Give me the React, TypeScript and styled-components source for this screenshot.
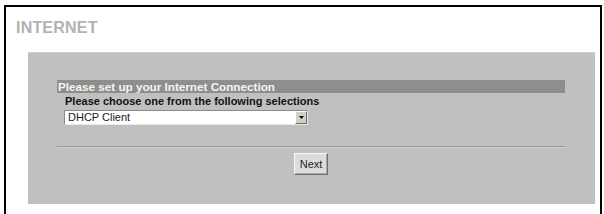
import styled, { createGlobalStyle } from 'styled-components'

const Global = createGlobalStyle`
  html, body {
    margin: 0;
    padding: 0;
    background: #ffffff;
    font-family: 'Liberation Sans', Arial, sans-serif;
  }
`

const Frame = styled.div`
  margin: 5px 2px 0 4px;
  height: 209px;
  border: 2px solid #000;
  border-bottom: none;
  box-sizing: border-box;
  display: flex;
  flex-direction: column;
`

const Title = styled.div`
  padding: 12px 0 0 10px;
  height: 34px;
  box-sizing: border-box;
  font-size: 16px;
  font-weight: bold;
  line-height: 18px;
  color: #b2b2b2;
  letter-spacing: 0.2px;
`

const Panel = styled.div`
  margin: 11px 5px 0 22px;
  height: 152px;
  background: #c0c0c0;
  border-top: 1px solid #cdcdcd;
  box-sizing: border-box;
  padding: 27px 30px 0 29px;
  display: flex;
  flex-direction: column;
`

const Bar = styled.div`
  height: 13px;
  background: #8e8f8c;
  color: #f4f4f4;
  font-size: 11.7px;
  font-weight: bold;
  line-height: 13px;
  padding-left: 1px;
  white-space: nowrap;
`

const Label = styled.div`
  margin-top: 1px;
  padding-left: 8px;
  font-size: 11px;
  font-weight: bold;
  line-height: 14px;
  color: #111;
  white-space: nowrap;
`

const SelectRow = styled.div`
  padding-left: 7px;
  margin-top: 2px;
`

const SelectBox = styled.div`
  width: 244px;
  height: 15px;
  box-sizing: border-box;
  background: #fff;
  border: 1px solid #8a8a8a;
  border-right-color: #e8e8e8;
  border-bottom-color: #e8e8e8;
  display: flex;
  align-items: center;
`

const SelectText = styled.span`
  flex: 1;
  font-size: 11px;
  line-height: 13px;
  padding-left: 3px;
  color: #222;
`

const ArrowButton = styled.span`
  width: 12px;
  height: 13px;
  box-sizing: border-box;
  background: #d4d0c8;
  border: 1px solid;
  border-color: #fff #6a6a6a #6a6a6a #fff;
  display: flex;
  align-items: center;
  justify-content: center;
`

const Separator = styled.div`
  margin-top: 21px;
  height: 1px;
  background: #999;
  border-bottom: 1px solid #cccccc;
`

const ButtonRow = styled.div`
  display: flex;
  justify-content: center;
  margin-top: 5px;
`

const Button = styled.button`
  width: 34px;
  height: 22px;
  padding: 0;
  box-sizing: border-box;
  background: #dcdcdc;
  border: 1px solid;
  border-color: #f8f8f8 #6e6e6e #6e6e6e #f8f8f8;
  box-shadow: inset -1px -1px 0 #a8a8a8;
  font-family: 'Liberation Sans', Arial, sans-serif;
  font-size: 11px;
  color: #222;
`

export default function App() {
  return (
    <>
      <Global />
      <Frame>
        <Title>INTERNET</Title>
        <Panel>
          <Bar>Please set up your Internet Connection</Bar>
          <Label>Please choose one from the following selections</Label>
          <SelectRow>
            <SelectBox>
              <SelectText>DHCP Client</SelectText>
              <ArrowButton>
                <svg width="5" height="3" viewBox="0 0 5 3">
                  <path d="M0 0h5L2.5 3z" fill="#000" />
                </svg>
              </ArrowButton>
            </SelectBox>
          </SelectRow>
          <Separator />
          <ButtonRow>
            <Button>Next</Button>
          </ButtonRow>
        </Panel>
      </Frame>
    </>
  )
}
